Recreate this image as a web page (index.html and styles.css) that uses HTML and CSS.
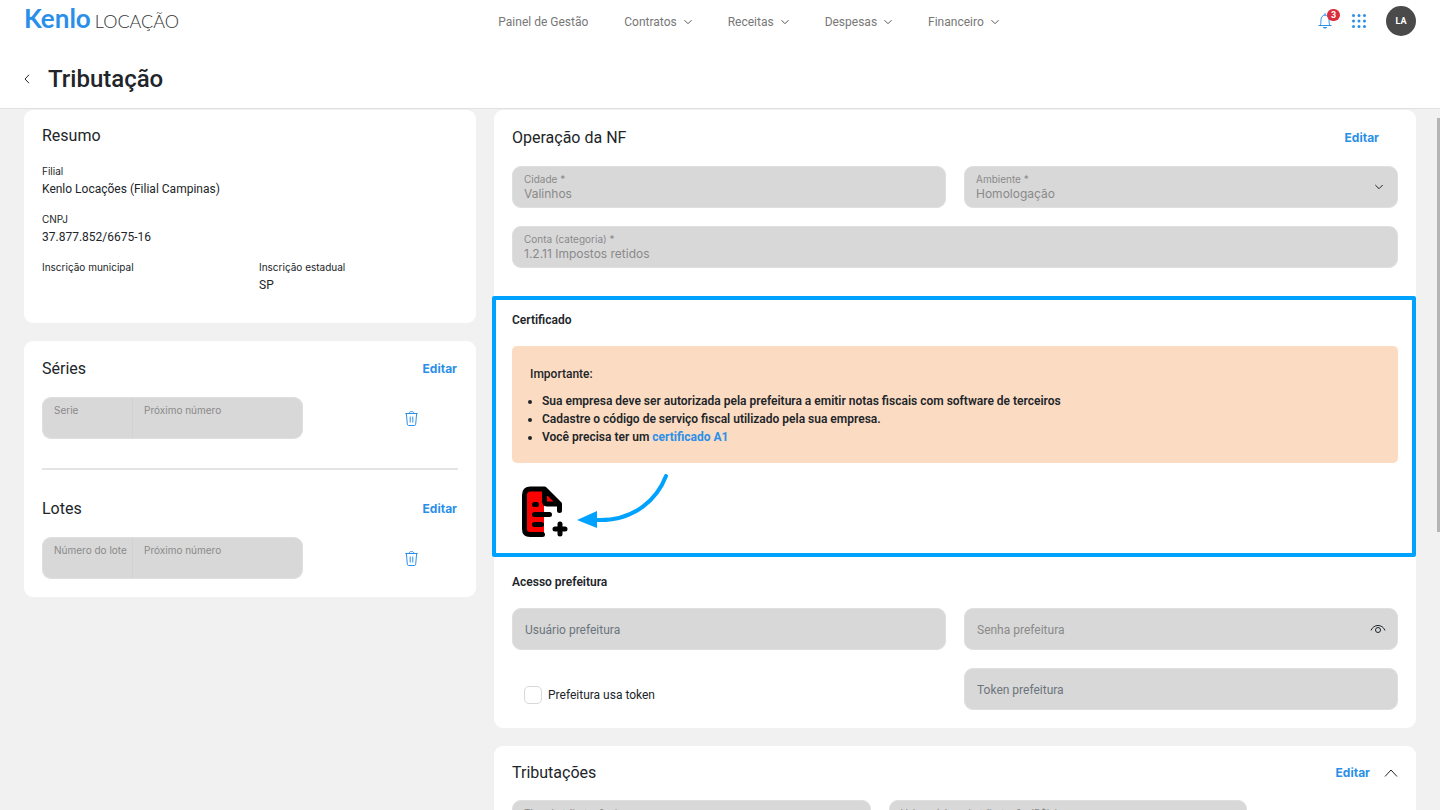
FILE: index.html
```html
<!DOCTYPE html>
<html lang="pt-BR">
  <head>
    <meta charset="utf-8" />
    <meta name="viewport" content="width=device-width, initial-scale=1" />
    <title>Tributação - Kenlo Locação</title>
    <link rel="stylesheet" href="styles.css">
  </head>
  <body>
    <header class="header">
      <div class="topbar">
        <a class="logo" href="#"><span class="logo-brand">Kenlo</span><span class="logo-product">LOCAÇÃO</span></a>
        <nav class="menu">
          <a href="#">Painel de Gestão</a>
          <a href="#">Contratos <svg class="chevron" viewBox="0 0 8 8"><path d="M.5 2.2 4 5.7 7.5 2.2" /></svg></a>
          <a href="#">Receitas <svg class="chevron" viewBox="0 0 8 8"><path d="M.5 2.2 4 5.7 7.5 2.2" /></svg></a>
          <a href="#">Despesas <svg class="chevron" viewBox="0 0 8 8"><path d="M.5 2.2 4 5.7 7.5 2.2" /></svg></a>
          <a href="#">Financeiro <svg class="chevron" viewBox="0 0 8 8"><path d="M.5 2.2 4 5.7 7.5 2.2" /></svg></a>
        </nav>
        <div class="tools">
          <button class="icon-button bell" aria-label="Notificações">
            <svg width="14" height="16" viewBox="0 0 14 16">
              <path d="M1 12.5h12M2.2 12.3c.6-1 .7-2 .7-4.600C2.900 4.500 4.500 2 7 2s4.100 2.500 4.100 5.700c0 2.600.1 3.600.7 4.600M7 .6V2" fill="none" stroke="#2a8fe8" stroke-linecap="round" />
              <path d="M5 14h4a2 1.500 0 0 1-4 0z" fill="#2a8fe8" />
            </svg>
            <span class="badge">3</span>
          </button>
          <button class="icon-button" aria-label="Aplicativos">
            <svg width="14" height="14" viewBox="0 0 14 14" fill="#2a8fe8">
              <circle cx="1.500" cy="1.500" r="1.500" /><circle cx="7" cy="1.500" r="1.500" /><circle cx="12.500" cy="1.500" r="1.500" />
              <circle cx="1.500" cy="7" r="1.500" /><circle cx="7" cy="7" r="1.500" /><circle cx="12.500" cy="7" r="1.500" />
              <circle cx="1.500" cy="12.500" r="1.500" /><circle cx="7" cy="12.500" r="1.500" /><circle cx="12.500" cy="12.500" r="1.500" />
            </svg>
          </button>
          <button class="avatar">LA</button>
        </div>
      </div>
      <div class="page-title">
        <button class="icon-button" aria-label="Voltar">
          <svg width="6" height="10" viewBox="0 0 6 10"><path d="M5 .8 1 5l4 4.200" fill="none" stroke="#212529" /></svg>
        </button>
        <h1>Tributação</h1>
      </div>
    </header>

    <main class="content">
      <div class="side">
        <section class="card">
          <h2>Resumo</h2>
          <dl class="summary">
            <div class="wide"><dt>Filial</dt><dd>Kenlo Locações (Filial Campinas)</dd></div>
            <div class="wide"><dt>CNPJ</dt><dd>37.877.852/6675-16</dd></div>
            <div><dt>Inscrição municipal</dt><dd></dd></div>
            <div><dt>Inscrição estadual</dt><dd>SP</dd></div>
          </dl>
        </section>

        <section class="card">
          <div class="card-head">
            <h2>Séries</h2>
            <button class="edit">Editar</button>
          </div>
          <div class="number-row">
            <div class="field-group">
              <div class="field short"><label for="serie">Serie</label><input id="serie" type="text" disabled /></div>
              <div class="field"><label for="serieNumero">Próximo número</label><input id="serieNumero" type="text" disabled /></div>
            </div>
            <button class="icon-button trash" aria-label="Excluir série">
              <svg width="13" height="15" viewBox="0 0 13 15"><path d="M.3 2.500h12.400M4.300 2.300C4.300 1 5 .6 6.500.6s2.200.4 2.200 1.700M1.400 2.700l.9 10.500c.1.900.6 1.300 1.400 1.300h5.600c.8 0 1.300-.4 1.400-1.300l.9-10.500M5.200 5.500v6M7.800 5.500v6" /></svg>
            </button>
          </div>
          <hr />
          <div class="card-head">
            <h2>Lotes</h2>
            <button class="edit">Editar</button>
          </div>
          <div class="number-row">
            <div class="field-group">
              <div class="field short"><label for="lote">Número do lote</label><input id="lote" type="text" disabled /></div>
              <div class="field"><label for="loteNumero">Próximo número</label><input id="loteNumero" type="text" disabled /></div>
            </div>
            <button class="icon-button trash" aria-label="Excluir lote">
              <svg width="13" height="15" viewBox="0 0 13 15"><path d="M.3 2.500h12.400M4.300 2.300C4.300 1 5 .6 6.500.6s2.200.4 2.200 1.700M1.400 2.700l.9 10.500c.1.900.6 1.300 1.400 1.300h5.600c.8 0 1.300-.4 1.400-1.300l.9-10.500M5.200 5.500v6M7.800 5.500v6" /></svg>
            </button>
          </div>
        </section>
      </div>

      <div class="main">
        <section class="card">
          <div class="card-head operation-head">
            <h2>Operação da NF</h2>
            <button class="edit">Editar</button>
          </div>
          <div class="form-grid">
            <div class="field"><label for="cidade">Cidade *</label><input id="cidade" type="text" value="Valinhos" disabled /></div>
            <div class="field">
              <label for="ambiente">Ambiente *</label>
              <select id="ambiente" disabled><option>Homologação</option></select>
              <svg class="field-icon" width="10" height="10" viewBox="0 0 10 10"><path d="M1.300 3 5 6.700 8.700 3" /></svg>
            </div>
            <div class="field wide"><label for="conta">Conta (categoria) *</label><input id="conta" type="text" value="1.2.11 Impostos retidos" disabled /></div>
          </div>

          <div class="certificate">
            <h3>Certificado</h3>
            <div class="notice">
              <p>Importante:</p>
              <ul>
                <li>Sua empresa deve ser autorizada pela prefeitura a emitir notas fiscais com software de terceiros</li>
                <li>Cadastre o código de serviço fiscal utilizado pela sua empresa.</li>
                <li>Você precisa ter um <a href="#">certificado A1</a></li>
              </ul>
            </div>
            <div class="upload">
              <button class="icon-button" aria-label="Adicionar certificado">
                <svg width="46" height="52" viewBox="0 0 46 52">
                  <path d="M3 3h17l1 11 9 2-8 3v31H3z M23 6l10 10H23z" fill="#f00" />
                  <g fill="none" stroke="#000" stroke-width="5" stroke-linecap="round" stroke-linejoin="round">
                    <path d="M20.500 48.500H8c-4 0-5.500-2-5.500-5.500V9c0-4 2-6 6-6h14l15 15v6.500M22.500 3v12c0 2 1 3 3 3h12" />
                    <path d="M12.500 18.500h2M12.500 28.500h15M12.500 38.500h7M33 43h10M38 38v10" />
                  </g>
                </svg>
              </button>
              <svg class="arrow" width="92" height="56" viewBox="0 0 92 56">
                <path d="M89 2C81 23 59 48 18 46" fill="none" stroke="#00a2ff" stroke-width="4" stroke-linecap="round" />
                <path d="M0 46 20 37v17z" fill="#00a2ff" />
              </svg>
            </div>
          </div>

          <h3>Acesso prefeitura</h3>
          <div class="form-grid access">
            <input class="box" type="text" placeholder="Usuário prefeitura" aria-label="Usuário prefeitura" disabled />
            <div class="box-wrap">
              <input class="box password" type="password" placeholder="Senha prefeitura" aria-label="Senha prefeitura" disabled />
              <svg class="field-icon" width="16" height="10" viewBox="0 0 16 10"><path d="M1 6.500C3.500-.2 12.500-.2 15 6.500" /><circle cx="8" cy="6" r="2.500" /></svg>
            </div>
            <label class="check"><input type="checkbox" /> Prefeitura usa token</label>
            <input class="box" type="text" placeholder="Token prefeitura" aria-label="Token prefeitura" disabled />
          </div>
        </section>

        <section class="card">
          <div class="card-head taxes-head">
            <h2>Tributações</h2>
            <button class="edit">Editar</button>
            <button class="icon-button" aria-label="Recolher">
              <svg width="14" height="10" viewBox="0 0 14 10"><path d="M1 8.500 7 2l6 6.500" fill="none" stroke="#212529" /></svg>
            </button>
          </div>
          <div class="taxes-grid">
            <div class="field"><label for="tipo">Tipo de tributação *</label><input id="tipo" type="text" disabled /></div>
            <div class="field"><label for="valor">Valor mínimo de tributação (R$) *</label><input id="valor" type="text" disabled /></div>
          </div>
        </section>
      </div>
      <div class="scroll-thumb"></div>
    </main>
  </body>
</html>
```
FILE: styles.css
```css
* {
  box-sizing: border-box;
}
body {
  margin: 0;
  height: 100vh;
  display: flex;
  flex-direction: column;
  overflow: hidden;
  background-color: #f1f1f1;
  color: #212529;
  font-family: Roboto, "Liberation Sans", sans-serif;
  font-size: 12px;
  line-height: 18px;
}
a {
  color: #2a8fe8;
  text-decoration: none;
}
button,
input,
select {
  font: inherit;
}
h1,
h2,
h3,
p,
ul,
dl,
dd {
  margin: 0;
  padding: 0;
}
h1 {
  font-size: 24px;
  line-height: 32px;
  font-weight: 500;
}
h2 {
  font-size: 16px;
  line-height: 16px;
  font-weight: 400;
}
h3 {
  font-size: 12px;
  line-height: 18px;
  font-weight: 600;
}

/* header */
.header {
  flex: none;
  background-color: white;
  border-bottom: 1px solid #e0e0e0;
  padding: 0 24px;
}
.topbar {
  display: flex;
  align-items: center;
  justify-content: space-between;
  height: 42px;
}
.logo {
  display: flex;
  align-items: baseline;
  gap: 4px;
  padding-bottom: 4px;
  font-family: Lato, sans-serif;
  line-height: 24px;
}
.logo-brand {
  font-size: 26px;
  font-weight: 700;
}
.logo-product {
  font-size: 18px;
  font-weight: 300;
  color: #333;
}
.menu {
  display: flex;
  gap: 36px;
  padding-top: 2px;
}
.menu a {
  color: #777;
}
.chevron {
  width: 8px;
  height: 8px;
  margin-left: 4px;
  fill: none;
  stroke: #555;
}
.tools {
  display: flex;
  align-items: center;
  gap: 20px;
}
.icon-button {
  display: block;
  border: none;
  background: none;
  padding: 0;
  cursor: pointer;
}
.icon-button svg {
  display: block;
}
.bell {
  position: relative;
}
.badge {
  position: absolute;
  top: -4px;
  left: 9px;
  width: 13px;
  height: 12px;
  border-radius: 6px;
  background-color: #dc2d3c;
  color: white;
  font-size: 9px;
  font-weight: 700;
  line-height: 12px;
}
.avatar {
  width: 30px;
  height: 30px;
  border: none;
  border-radius: 50%;
  padding: 0;
  background-color: #4a4a4a;
  color: white;
  font-size: 9px;
  font-weight: 700;
}
.page-title {
  display: flex;
  align-items: center;
  gap: 18px;
  height: 66px;
  padding-top: 8px;
}

/* content */
.content {
  position: relative;
  flex: 1;
  min-height: 0;
  overflow: hidden;
  display: grid;
  grid-template-columns: repeat(12, 1fr);
  align-items: start;
  gap: 18px;
  padding: 1px 24px 0;
}
.side {
  grid-column: span 4;
}
.main {
  grid-column: span 8;
}
.card {
  background-color: white;
  border-radius: 9px;
  padding: 18px;
  margin-bottom: 18px;
}
.card-head {
  display: flex;
  align-items: center;
  justify-content: space-between;
  min-height: 20px;
}
.edit {
  border: none;
  background: none;
  padding: 0 1px;
  color: #2a8fe8;
  font-family: Inter, sans-serif;
  font-weight: 700;
  cursor: pointer;
}
.operation-head {
  padding-right: 18px;
}
.summary {
  display: grid;
  grid-template-columns: 1fr 1fr;
  gap: 12px 18px;
  padding: 18px 0 11px;
}
.summary div {
  min-height: 36px;
}
.summary dt {
  font-family: Inter, sans-serif;
  font-size: 10px;
}
.wide {
  grid-column: 1 / -1;
}
.number-row {
  display: flex;
  align-items: center;
  padding-top: 18px;
}
.field-group {
  display: flex;
  flex: 0 0 261px;
}
.trash {
  margin-left: auto;
  margin-right: 40px;
}
.trash svg {
  fill: none;
  stroke: #2a8fe8;
}
hr {
  border: none;
  border-top: 2px solid #e4e4e4;
  margin: 29px 0;
}

/* form fields */
.field {
  position: relative;
  display: flex;
  flex-direction: column;
  height: 42px;
  min-width: 0;
  padding: 6px 11px 0;
  border: 1px solid #dfdfdf;
  border-radius: 9px;
  background-color: #d8d8d8;
  color: #8a8a8a;
}
.field label {
  font-family: Inter, sans-serif;
  font-size: 10px;
  line-height: 12px;
  white-space: nowrap;
}
.field input,
.field select {
  width: 100%;
  height: 18px;
  border: none;
  padding: 0;
  background: none;
  color: #8a8a8a;
  opacity: 1;
  appearance: none;
  font-family: Inter, sans-serif;
  line-height: 18px;
}
.field-group .field {
  flex: 1;
  border-left-color: #d2d2d2;
  border-radius: 0 9px 9px 0;
}
.field-group .short {
  flex: 0 0 90px;
  border-left-color: #dfdfdf;
  border-right: none;
  border-radius: 9px 0 0 9px;
}
.field-icon {
  position: absolute;
  right: 13px;
  top: 15px;
  fill: none;
  stroke: #212529;
}
.form-grid {
  display: grid;
  grid-template-columns: 1fr 1fr;
  gap: 18px;
  padding-top: 18px;
}
.box-wrap {
  position: relative;
}
.box {
  width: 100%;
  height: 42px;
  border: 1px solid #dfdfdf;
  border-radius: 9px;
  padding: 1px 12px 0;
  background-color: #d8d8d8;
}
.box::placeholder {
  color: #6c757d;
}
.password::placeholder {
  color: #8a8a8a;
}
.access {
  padding-top: 17px;
}
.access .field-icon {
  right: 12px;
  top: 16px;
}
.check {
  display: flex;
  align-items: center;
  gap: 6px;
  padding: 12px 12px 0;
}
.check input {
  appearance: none;
  width: 18px;
  height: 18px;
  margin: 0;
  border: 1px solid #d8d8d8;
  border-radius: 5px;
  background-color: white;
}

/* certificate */
.certificate {
  margin: 28px -18px 16px -20px;
  border: 4px solid #00a2ff;
  border-radius: 2px;
  padding: 11px 14px 15px 16px;
}
.notice {
  margin-top: 17px;
  padding: 19px 18px 17px;
  border-radius: 5px;
  background-color: #fbdcc3;
  font-weight: 600;
}
.notice p {
  font-weight: 500;
}
.notice ul {
  margin-top: 9px;
  padding-left: 12px;
}
.notice a {
  font-weight: 700;
}
.upload {
  display: flex;
  align-items: center;
  gap: 9px;
  padding: 11px 10px 0;
}
.upload .icon-button {
  padding-top: 12px;
}
.arrow {
  align-self: flex-start;
}

/* taxes */
.taxes-head {
  min-height: 18px;
}
.taxes-head .edit {
  margin-left: auto;
  margin-right: 13px;
}
.taxes-grid {
  display: grid;
  grid-template-columns: repeat(12, 1fr);
  gap: 18px;
  padding-top: 18px;
}
.taxes-grid .field {
  grid-column: span 5;
}

.scroll-thumb {
  position: absolute;
  top: 9px;
  right: 0;
  width: 3px;
  height: 59%;
  background-color: #b5b5b5;
}
```
